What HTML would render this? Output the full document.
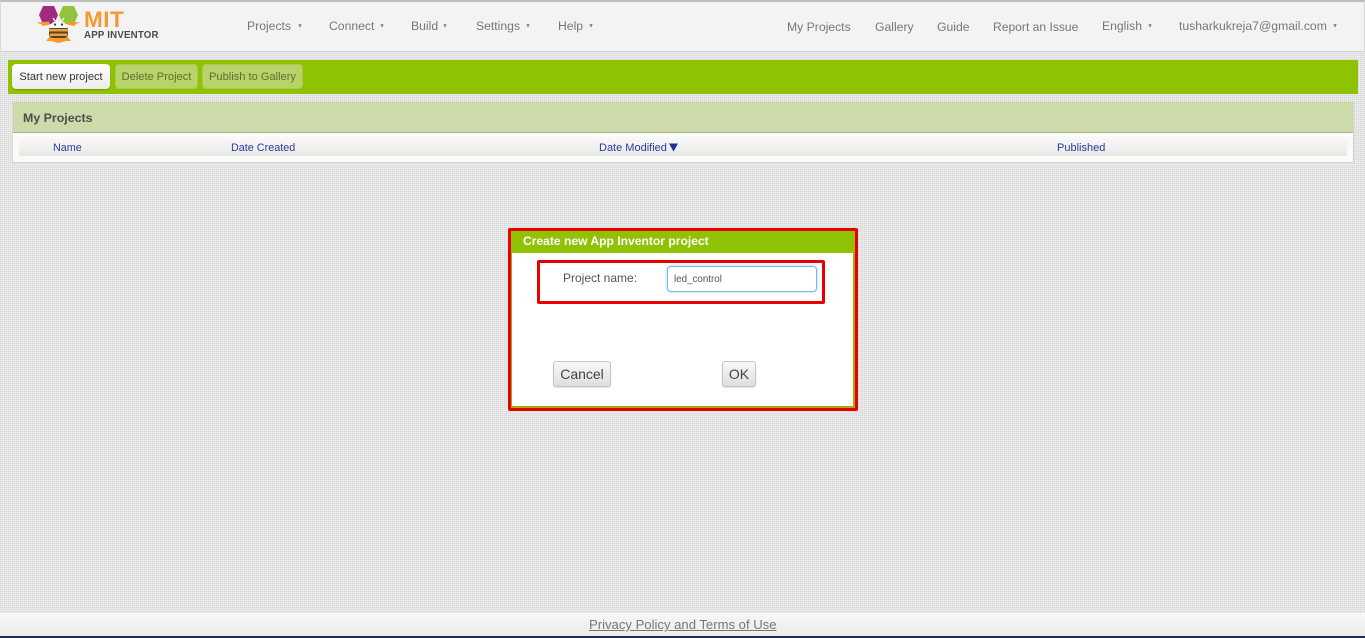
<!DOCTYPE html>
<html><head><meta charset="utf-8"><title>MIT App Inventor</title>
<style>
html,body{margin:0;padding:0;width:1365px;height:638px;overflow:hidden}
body{position:relative;font-family:"Liberation Sans",sans-serif;background-color:#f0f0f0;background-image:linear-gradient(90deg,rgba(0,0,0,.05) 50%,transparent 50%),linear-gradient(0deg,rgba(0,0,0,.05) 50%,transparent 50%);background-size:2px 2px}
.a{position:absolute;white-space:nowrap}
.n{font-size:12.2px;color:#777;line-height:16px;top:18px}
.c{font-size:8px;color:#777;line-height:10px;top:21px;transform:scale(.7)}
.b{top:64px;height:25px;line-height:26px;border-radius:4px;font-size:11.1px;text-align:center;box-sizing:border-box}
.h{font-size:10.8px;color:#2d3a9e;top:141px;line-height:14px}
.btn{top:361px;height:26px;line-height:25px;box-sizing:border-box;border:1px solid #c4c4c4;border-radius:3px;background:linear-gradient(#f8f8f8,#dedede);font-size:14px;color:#444;text-align:center;box-shadow:0 1px 1px rgba(0,0,0,.12)}
</style></head><body>
<div class="a" style="left:0;top:0;width:1365px;height:52px;box-sizing:border-box;background:#f3f3f3;border-top:2px solid #bdbdbd;border-left:1px solid #d8d8d8;border-right:1px solid #d8d8d8;border-bottom:1px solid #d0d0d0"></div>
<svg class="a" style="left:36px;top:5px" width="46" height="38" viewBox="0 0 46 38">
<polygon points="7,1 18,1 22,10 18,19 7,19 3,10" fill="#a02a80"/>
<polygon points="27,1 38,1 42,10 38,19 27,19 23,10" fill="#93c23c"/>
<path d="M0 17.500 L13 16.500 L14 19.500 L7 21 L5 19Z M44 17.500 L32 16.500 L31 19.500 L38 21 L40 19Z" fill="#f59a2f"/>
<path d="M10 36 L14 31 L31 31 L35 36 L30 36 L22.500 38 L15 36Z" fill="#f59a2f"/>
<rect x="13" y="21" width="19" height="12" rx="4" fill="#5b4326"/>
<rect x="13" y="24" width="19" height="2.500" fill="#e9a23b"/><rect x="14" y="28.500" width="17" height="2.500" fill="#e9a23b"/>
<path d="M14 23 C14 18 18 16 22.500 16 C27 16 31 18 31 23 Z" fill="#f6f6f6"/>
<circle cx="19" cy="19.500" r="1.100" fill="#333"/><circle cx="26" cy="19.500" r="1.100" fill="#333"/>
<path d="M19 16 L17 13 M26 16 L28 13" stroke="#f6f6f6" stroke-width="1.300"/>
</svg>
<div class="a" style="left:84px;top:9px;font-size:22.5px;font-weight:bold;color:#f59a2f;line-height:22px;letter-spacing:.5px">MIT</div>
<div class="a" style="left:84px;top:30px;font-size:9.7px;font-weight:bold;color:#4a4a4a;line-height:12px;letter-spacing:.2px">APP INVENTOR</div>

<div class="a n" style="left:247px">Projects</div><div class="a c" style="left:296px">▼</div>
<div class="a n" style="left:329px">Connect</div><div class="a c" style="left:378px">▼</div>
<div class="a n" style="left:411px">Build</div><div class="a c" style="left:441px">▼</div>
<div class="a n" style="left:476px">Settings</div><div class="a c" style="left:524px">▼</div>
<div class="a n" style="left:558px">Help</div><div class="a c" style="left:587px">▼</div>
<div class="a n" style="left:787px;top:19px">My Projects</div>
<div class="a n" style="left:875px;top:19px">Gallery</div>
<div class="a n" style="left:937px;top:19px">Guide</div>
<div class="a n" style="left:993px;top:19px;font-size:12.1px">Report an Issue</div>
<div class="a n" style="left:1102px">English</div><div class="a c" style="left:1146px">▼</div>
<div class="a n" style="left:1179px">tusharkukreja7@gmail.com</div><div class="a c" style="left:1331px">▼</div>

<div class="a" style="left:8px;top:60px;width:1350px;height:34px;background:#8fc202"></div>
<div class="a b" style="left:12px;width:98px;background:linear-gradient(#fff,#ececec);color:#333;box-shadow:0 1px 1px rgba(0,0,0,.2)">Start new project</div>
<div class="a b" style="left:115px;width:83px;background:#b7d369;color:#5f7030;border:1px solid #a8ca50;line-height:24px">Delete Project</div>
<div class="a b" style="left:202px;width:101px;background:#b7d369;color:#5f7030;border:1px solid #a8ca50;line-height:24px">Publish to Gallery</div>

<div class="a" style="left:12px;top:102px;width:1342px;height:61px;box-sizing:border-box;background:#fafaf7;border:1px solid #d5d5d5"></div>
<div class="a" style="left:13px;top:102px;width:1340px;height:31px;box-sizing:border-box;background:#cddaa9;border-bottom:1px solid #aab28f"></div>
<div class="a" style="left:23px;top:110px;font-size:12.4px;font-weight:bold;color:#4d4d4d;line-height:16px">My Projects</div>
<div class="a" style="left:19px;top:135px;width:1328px;height:21px;background:linear-gradient(#fbfbf9,#e9e9e9)"></div>
<div class="a h" style="left:53px">Name</div>
<div class="a h" style="left:231px">Date Created</div>
<div class="a h" style="left:599px;font-size:11px">Date Modified</div>
<svg class="a" style="left:669px;top:143px" width="9" height="9" viewBox="0 0 9 9"><polygon points="0,0.500 9,0.500 4.500,8.500" fill="#1f2f9a"/></svg>
<div class="a h" style="left:1057px;font-size:11px">Published</div>

<div class="a" style="left:508px;top:228px;width:350px;height:183px;box-sizing:border-box;border:3px solid #e60000;border-radius:2px;background:#fff"></div>
<div class="a" style="left:511px;top:231px;width:344px;height:177px;box-sizing:border-box;border:solid #9fb000;border-width:0 2px 2px 1px"></div>
<div class="a" style="left:511px;top:231px;width:344px;height:22px;background:#8fc202"></div>
<div class="a" style="left:523px;top:233px;font-size:12.1px;font-weight:bold;color:#fff;line-height:16px">Create new App Inventor project</div>
<div class="a" style="left:537px;top:260px;width:288px;height:44px;box-sizing:border-box;border:3px solid #e60000;border-radius:2px"></div>
<div class="a" style="left:563px;top:271px;font-size:12px;color:#555;line-height:15px">Project name:</div>
<div class="a" style="left:667px;top:266px;width:150px;height:26px;box-sizing:border-box;border:1px solid #7fb5e6;border-radius:4px;background:#fff;box-shadow:0 0 3px rgba(100,170,235,.6);font-size:9.8px;color:#555;line-height:26px;padding-left:6px">led_control</div>
<div class="a btn" style="left:553px;width:58px">Cancel</div>
<div class="a btn" style="left:722px;width:34px">OK</div>

<div class="a" style="left:0;top:613px;width:1365px;height:23px;background:linear-gradient(#f6f6f6,#ececec)"></div>
<div class="a" style="left:0;top:636px;width:1365px;height:2px;background:#1d2b4d"></div>
<div class="a" style="left:589px;top:617px;font-size:13.1px;color:#777;line-height:16px;text-decoration:underline">Privacy Policy and Terms of Use</div>
</body></html>
